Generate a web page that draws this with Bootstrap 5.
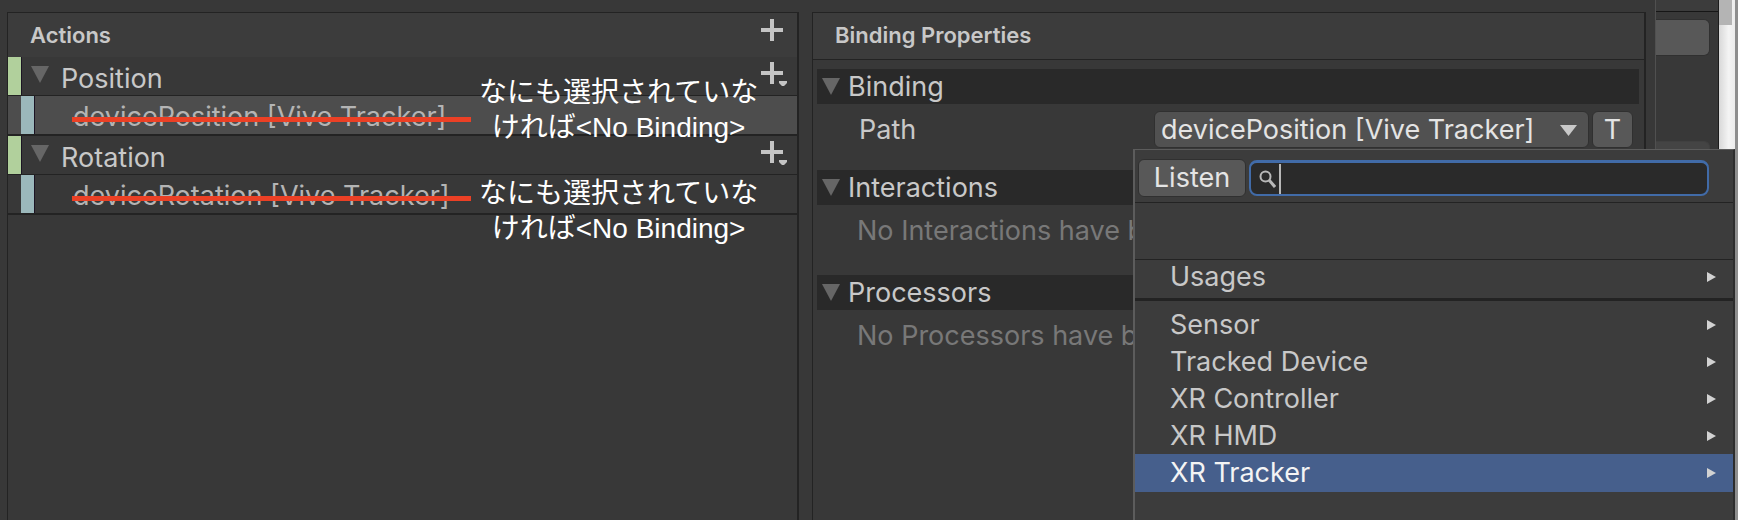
<!DOCTYPE html>
<html lang="ja">
<head>
<meta charset="utf-8">
<meta name="viewport" content="width=device-width, initial-scale=1">
<title>Input Actions</title>
<link rel="stylesheet" href="https://cdn.jsdelivr.net/npm/bootstrap@5.3.0/dist/css/bootstrap.min.css">
<style>
:root { --face: #383838; --raised: #3c3c3c; --line: #232323; --ink: #c8c8c8; --ctl: #585858; }
body { background: var(--face); color: var(--ink); font: 27px/32px Inter, "Liberation Sans", sans-serif; }
.editor { min-height: 100vh; overflow: hidden; }
.panes { display: grid; grid-template-columns: 793fr 835fr; gap: 13px; padding: 12px 9px 0 7px; border-right: 1px solid #505050; min-width: 0; }
.pane { border: 1px solid var(--line); border-right-width: 2px; border-bottom: 0; min-width: 0; overflow: hidden; }
.pane-head { background: var(--raised); height: 44px; padding: 0 9px 0 22px; }
.pane-head h2 { font-size: 22px; line-height: 44px; font-weight: 600; margin: 0; }
.pane-head.ruled { height: 47px; border-bottom: 1px solid var(--line); }
.flat { background: none; border: 0; padding: 0; color: inherit; line-height: 0; }
.tree-row { height: 39px; border-bottom: 1px solid var(--line); }
.tree-row.leaf { height: 40px; border-bottom-width: 2px; padding-left: 13px; }
.tree-row.picked { background: #4d4d4d; }
.tree-row .flat { margin-right: 9px; }
.swatch { width: 14px; align-self: stretch; background: #b1d09c; border-right: 1px solid #1c1424; flex: none; }
.leaf .swatch { background: #9bb8bb; }
.tree-row .fold { margin: 0 12px 4px 9px; }
.row-name { padding-top: 5px; }
.struck { margin-left: 38px; padding-top: 4px; position: relative; white-space: nowrap; color: #b4b4b4; }
.struck::after { content: ""; position: absolute; left: -1px; top: 20px; width: 399px; height: 5px; background: #eb4025; }
.remarks { position: absolute; left: 471px; top: 18px; width: 278px; display: grid; gap: 31px; text-align: center; color: #fff; font: 28px/35px "Liberation Sans", "Noto Sans CJK JP", sans-serif; white-space: nowrap; }
.remarks p { margin: 0; }
.props { padding: 9px 5px 0 4px; }
.sect { background: #292929; height: 35px; padding-left: 5px; font-size: inherit; line-height: 34px; font-weight: 400; margin: 0; gap: 8px; }
.sect-body { padding: 10px 0 28px 40px; white-space: nowrap; color: #787878; }
.ctl { background-color: var(--ctl); border: 1px solid #303030; border-radius: 6px; color: #e4e4e4; padding: 0; line-height: 32px; font-size: 27px; }
.path-row { padding: 7px 6px 0 42px; gap: 3px; height: 66px; }
.path-row label { line-height: 38px; }
.path-row .form-select { width: 435px; height: 37px; padding: 0 30px 0 6px; background-color: #515151; background-position: right 11px center; background-size: 17px 12px; --bs-form-select-bg-img: url("data:image/svg+xml,%3csvg xmlns='http://www.w3.org/2000/svg' viewBox='0 0 17 12'%3e%3cpath fill='%23c8c8c8' d='M0 1h17L8.500 12z'/%3e%3c/svg%3e"); background-image: var(--bs-form-select-bg-img); }
.path-row .ctl-t { width: 41px; height: 37px; }
.behind { width: 82px; flex: none; }
.behind-face { width: 63px; border-right: 1px solid #1c1c1c; }
.behind-top { height: 12px; border-bottom: 1px solid #161616; background: var(--raised); }
.stub { display: block; width: 54px; height: 37px; margin-top: 7px; background: var(--ctl); border: 1px solid #303030; border-left: 0; border-radius: 0 6px 6px 0; padding: 0; }
.stub.dim { margin-top: 85px; background: #444; border-color: #404040; }
.track { width: 16px; background: linear-gradient(90deg, #d8d8d8, #f4f4f4 60%, #ececec); }
.thumb { width: 13px; height: 25px; background: #b4b4b4; }
.edge { width: 3px; background: #8e8e8e; }
.picker { position: absolute; top: 149px; right: 3px; bottom: 0; width: 602px; background: var(--raised); border: 2px solid #5c5c5c; border-top-width: 1px; border-right: 2px solid #2c2c2c; border-bottom: 0; }
.picker-top { height: 53px; padding: 9px 24px 0 3px; gap: 3px; border-bottom: 1px solid var(--line); }
.listen { width: 108px; height: 38px; }
.find { height: 36px; margin-top: 1px; background: #2a2a2a; border: 2px solid #416ba8; border-top-width: 3px; border-radius: 8px; padding-left: 8px; min-width: 0; }
.find input { background: none; border: 0; outline: 0; color: #e4e4e4; padding: 0; min-width: 0; }
.caret { width: 2px; height: 30px; background: #b8b8b8; margin-left: 3px; flex: none; }
.crumb { height: 57px; border-bottom: 1px solid var(--line); }
.pick { display: flex; align-items: center; justify-content: space-between; height: 37px; width: 100%; padding: 0 17px 0 35px; background: none; border: 0; border-radius: 0; color: var(--ink); line-height: 36px; text-align: left; }
.pick-first { height: 41px; padding-bottom: 5px; border-bottom: 3px solid var(--line); margin-bottom: 5px; }
.pick.active { background: #465f8c; color: #f4f4f4; height: 38px; }
</style>
</head>
<body>
<svg class="d-none">
  <symbol id="fold" viewBox="0 0 18 17"><path fill="#666" d="M0 0h18L9 17z"/></symbol>
  <symbol id="plus" viewBox="0 0 27 28"><path fill="#c4c4c4" d="M9 0h4v9h9v4h-9v9H9v-9H0V9h9z"/></symbol>
  <symbol id="plusmenu" viewBox="0 0 27 28"><path fill="#c4c4c4" d="M9 0h4v9h9v4h-9v9H9v-9H0V9h9zM18 19h8v2l-3 3h-2l-3-3z"/></symbol>
  <symbol id="next" viewBox="0 0 9 10"><path fill="#d2d2d2" d="M0 0l9 5-9 5z"/></symbol>
</svg>
<div class="editor d-flex position-relative">
  <main class="panes flex-grow-1">
    <section class="pane">
      <header class="pane-head d-flex justify-content-between">
        <h2>Actions</h2>
        <button class="flat pb-1" aria-label="Add action"><svg width="27" height="28"><use href="#plus"/></svg></button>
      </header>
      <div class="position-relative">
        <div class="tree-row d-flex align-items-center"><span class="swatch"></span><svg class="fold" width="18" height="17"><use href="#fold"/></svg><span class="row-name flex-grow-1">Position</span><button class="flat" aria-label="Add binding to Position"><svg width="27" height="28"><use href="#plusmenu"/></svg></button></div>
        <div class="tree-row leaf picked d-flex align-items-center"><span class="swatch"></span><span class="struck">devicePosition [Vive Tracker]</span></div>
        <div class="tree-row d-flex align-items-center"><span class="swatch"></span><svg class="fold" width="18" height="17"><use href="#fold"/></svg><span class="row-name flex-grow-1">Rotation</span><button class="flat" aria-label="Add binding to Rotation"><svg width="27" height="28"><use href="#plusmenu"/></svg></button></div>
        <div class="tree-row leaf d-flex align-items-center"><span class="swatch"></span><span class="struck">deviceRotation [Vive Tracker]</span></div>
        <div class="remarks">
          <p>なにも選択されていな<br>ければ&lt;No Binding&gt;</p>
          <p>なにも選択されていな<br>ければ&lt;No Binding&gt;</p>
        </div>
      </div>
    </section>
    <section class="pane">
      <header class="pane-head ruled"><h2>Binding Properties</h2></header>
      <div class="props">
        <h3 class="sect d-flex align-items-center"><svg width="18" height="17"><use href="#fold"/></svg>Binding</h3>
        <div class="path-row d-flex">
          <label for="path" class="flex-grow-1">Path</label>
          <select id="path" class="form-select ctl"><option>devicePosition [Vive Tracker]</option></select>
          <button class="ctl ctl-t">T</button>
        </div>
        <h3 class="sect d-flex align-items-center"><svg width="18" height="17"><use href="#fold"/></svg>Interactions</h3>
        <div class="sect-body">No Interactions have been added.</div>
        <h3 class="sect d-flex align-items-center"><svg width="18" height="17"><use href="#fold"/></svg>Processors</h3>
        <div class="sect-body">No Processors have been added.</div>
      </div>
    </section>
  </main>
  <aside class="behind d-flex">
    <div class="behind-face"><div class="behind-top"></div><button class="stub" aria-label="Apply"></button><button class="stub dim" aria-label="Reset"></button></div>
    <div class="track"><div class="thumb"></div></div>
    <div class="edge"></div>
  </aside>
  <div class="picker">
    <div class="picker-top d-flex align-items-start">
      <button class="ctl listen">Listen</button>
      <label class="find d-flex align-items-center flex-grow-1">
        <svg width="17" height="18" viewBox="0 0 17 18" fill="none" stroke="#b8b8b8"><circle cx="6.500" cy="6.500" r="5" stroke-width="2"/><path stroke-width="3" d="M10 10l6 7"/></svg>
        <span class="caret"></span>
        <input class="flex-grow-1" type="text" aria-label="Search">
      </label>
    </div>
    <div class="crumb"></div>
    <button class="pick pick-first">Usages<svg width="9" height="10"><use href="#next"/></svg></button>
    <button class="pick">Sensor<svg width="9" height="10"><use href="#next"/></svg></button>
    <button class="pick">Tracked Device<svg width="9" height="10"><use href="#next"/></svg></button>
    <button class="pick">XR Controller<svg width="9" height="10"><use href="#next"/></svg></button>
    <button class="pick">XR HMD<svg width="9" height="10"><use href="#next"/></svg></button>
    <button class="pick active">XR Tracker<svg width="9" height="10"><use href="#next"/></svg></button>
  </div>
</div>
<script src="https://cdn.jsdelivr.net/npm/bootstrap@5.3.0/dist/js/bootstrap.bundle.min.js"></script>
</body>
</html>
